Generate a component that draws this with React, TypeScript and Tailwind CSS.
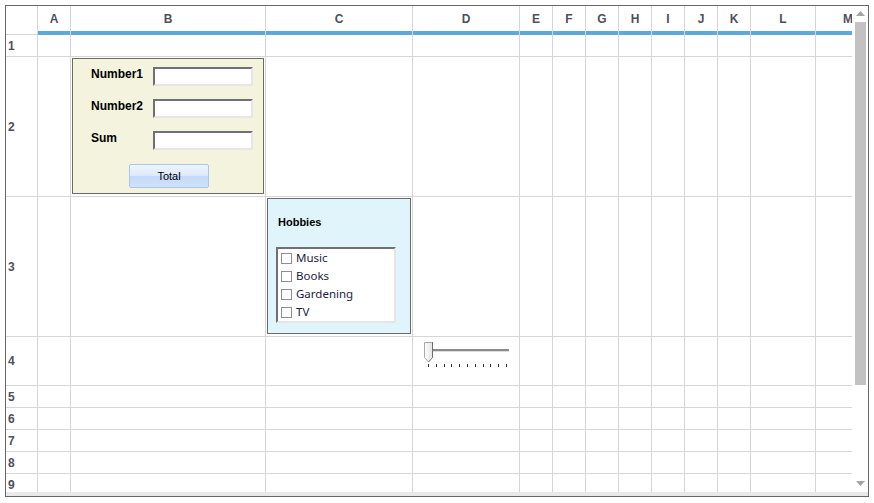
import type { ReactNode } from "react";

const COLS = ["A", "B", "C", "D", "E", "F", "G", "H", "I", "J", "K", "L", "M"];
const ROWS = [1, 2, 3, 4, 5, 6, 7, 8, 9];
const HOBBIES = ["Music", "Books", "Gardening", "TV"];

const line = "border-[#d6d6d6]";
const sunken =
  "border-2 border-t-[#707070] border-l-[#707070] border-b-[#e6e6e6] border-r-[#e6e6e6] bg-white";

function CalcForm() {
  const fields = ["Number1", "Number2", "Sum"];
  return (
    <div className="flex h-[136px] w-[192px] flex-col gap-[13px] border border-[#6a6a6a] bg-[#f4f4de] pl-[18px] pt-[8px]">
      {fields.map((f) => (
        <div key={f} className="flex h-[19px] items-start">
          <span className="w-[62px] text-[12px] font-bold leading-[15px] text-black">{f}</span>
          <input readOnly className={`h-[19px] w-[100px] ${sunken}`} />
        </div>
      ))}
      <div className="pl-[38px]">
        <button className="h-[24px] w-[80px] rounded-[2px] border border-[#a9c6ee] bg-[linear-gradient(#eef5fe_0%,#dce9fc_48%,#c4daf9_52%,#cfe2fb_100%)] text-[11px] text-black">
          Total
        </button>
      </div>
    </div>
  );
}

function HobbiesBox() {
  return (
    <div className="flex h-[136px] w-[144px] flex-col border border-[#6a6a6a] bg-[#dff4fb] pl-[8px] pt-[17px]">
      <span className="pl-[2px] text-[11px] font-bold leading-[13px] text-black">Hobbies</span>
      <div className={`mt-[18px] flex h-[76px] w-[120px] flex-col ${sunken}`}>
        {HOBBIES.map((h) => (
          <div key={h} className="flex h-[18px] items-center gap-[4px] pl-[3px]">
            <span className="h-[11px] w-[11px] border border-[#8e8e8e] bg-white" />
            <span className="font-['Noto_Sans',sans-serif] text-[11.5px] leading-none text-[#1c1c40]">{h}</span>
          </div>
        ))}
      </div>
    </div>
  );
}

function Slider() {
  const ticks = Array.from({ length: 11 }, (_, i) => Math.round(7 + i * 7.8));
  return (
    <svg width="92" height="32" viewBox="0 0 92 32" className="ml-[7px] mt-[1px]">
      <defs>
        <linearGradient id="thumb" x1="0" x2="1" y1="0" y2="0">
          <stop offset="0" stopColor="#ffffff" />
          <stop offset="1" stopColor="#e2e2e2" />
        </linearGradient>
      </defs>
      <rect x="12" y="10" width="76" height="2" fill="#8a8a8a" />
      <rect x="12" y="12" width="76" height="1" fill="#dcdcdc" />
      <polygon
        points="3.5,3.5 11.5,3.5 11.5,18.5 7.5,23 3.5,18.5"
        fill="url(#thumb)"
        stroke="#a8a8a8"
      />
      <line x1="11.5" y1="3" x2="11.5" y2="19" stroke="#6c6c6c" />
      <line x1="11.5" y1="18.5" x2="7.5" y2="23" stroke="#8a8a8a" />
      {ticks.map((x) => (
        <rect key={x} x={x} y="25" width="1" height="3" fill="#2f2f2f" />
      ))}
    </svg>
  );
}

function Cell({ children, className = "" }: { children?: ReactNode; className?: string }) {
  return <div className={`border-r border-b ${line} ${className}`}>{children}</div>;
}

function Sheet() {
  return (
    <div className="grid grid-cols-[32px_33px_195px_147px_107px_33px_33px_33px_33px_33px_33px_33px_65px_65px] grid-rows-[29px_22px_140px_140px_49px_22px_22px_22px_22px_22px]">
      <Cell />
      {COLS.map((c) => (
        <div key={c} className={`flex flex-col border-r ${line}`}>
          <div className="flex h-[25px] items-center justify-center text-[12px] font-bold text-[#4f4f5c]">
            {c}
          </div>
          <div className="h-[4px] bg-[#5ca9dc]" />
        </div>
      ))}
      {ROWS.map((r) => (
        <div key={r} className="contents">
          <Cell className="flex items-center pl-[2px] text-[12px] font-bold text-[#4f4f5c]">{r}</Cell>
          {COLS.map((c) => (
            <Cell key={c} className="p-[1px]">
              {r === 2 && c === "B" && <CalcForm />}
              {r === 3 && c === "C" && <HobbiesBox />}
              {r === 4 && c === "D" && <Slider />}
            </Cell>
          ))}
        </div>
      ))}
    </div>
  );
}

function ScrollBar() {
  return (
    <div className="flex w-[16px] flex-col bg-white pt-[5px]">
      <svg width="9" height="5" viewBox="0 0 9 5" className="ml-[4px]">
        <polygon points="0,5 4.5,0 9,5" fill="#a3a3a3" />
      </svg>
      <div className="ml-[3px] mt-[6px] h-[363px] w-[11px] bg-[#c2c2c2]" />
      <svg width="9" height="5" viewBox="0 0 9 5" className="ml-[4px] mt-[96px]">
        <polygon points="0,0 9,0 4.5,5" fill="#a3a3a3" />
      </svg>
    </div>
  );
}

export default function App() {
  return (
    <div className="h-[503px] w-[874px] bg-white pl-[5px] pt-[5px] font-['Liberation_Sans',Arial,sans-serif]">
      <div className="flex h-[492px] w-[864px] flex-col border border-[#676767]">
        <div className="flex h-[486px]">
          <div className="w-[846px] overflow-hidden">
            <Sheet />
          </div>
          <ScrollBar />
        </div>
        <div className="h-[4px] bg-[#e9e9e9]" />
      </div>
    </div>
  );
}
